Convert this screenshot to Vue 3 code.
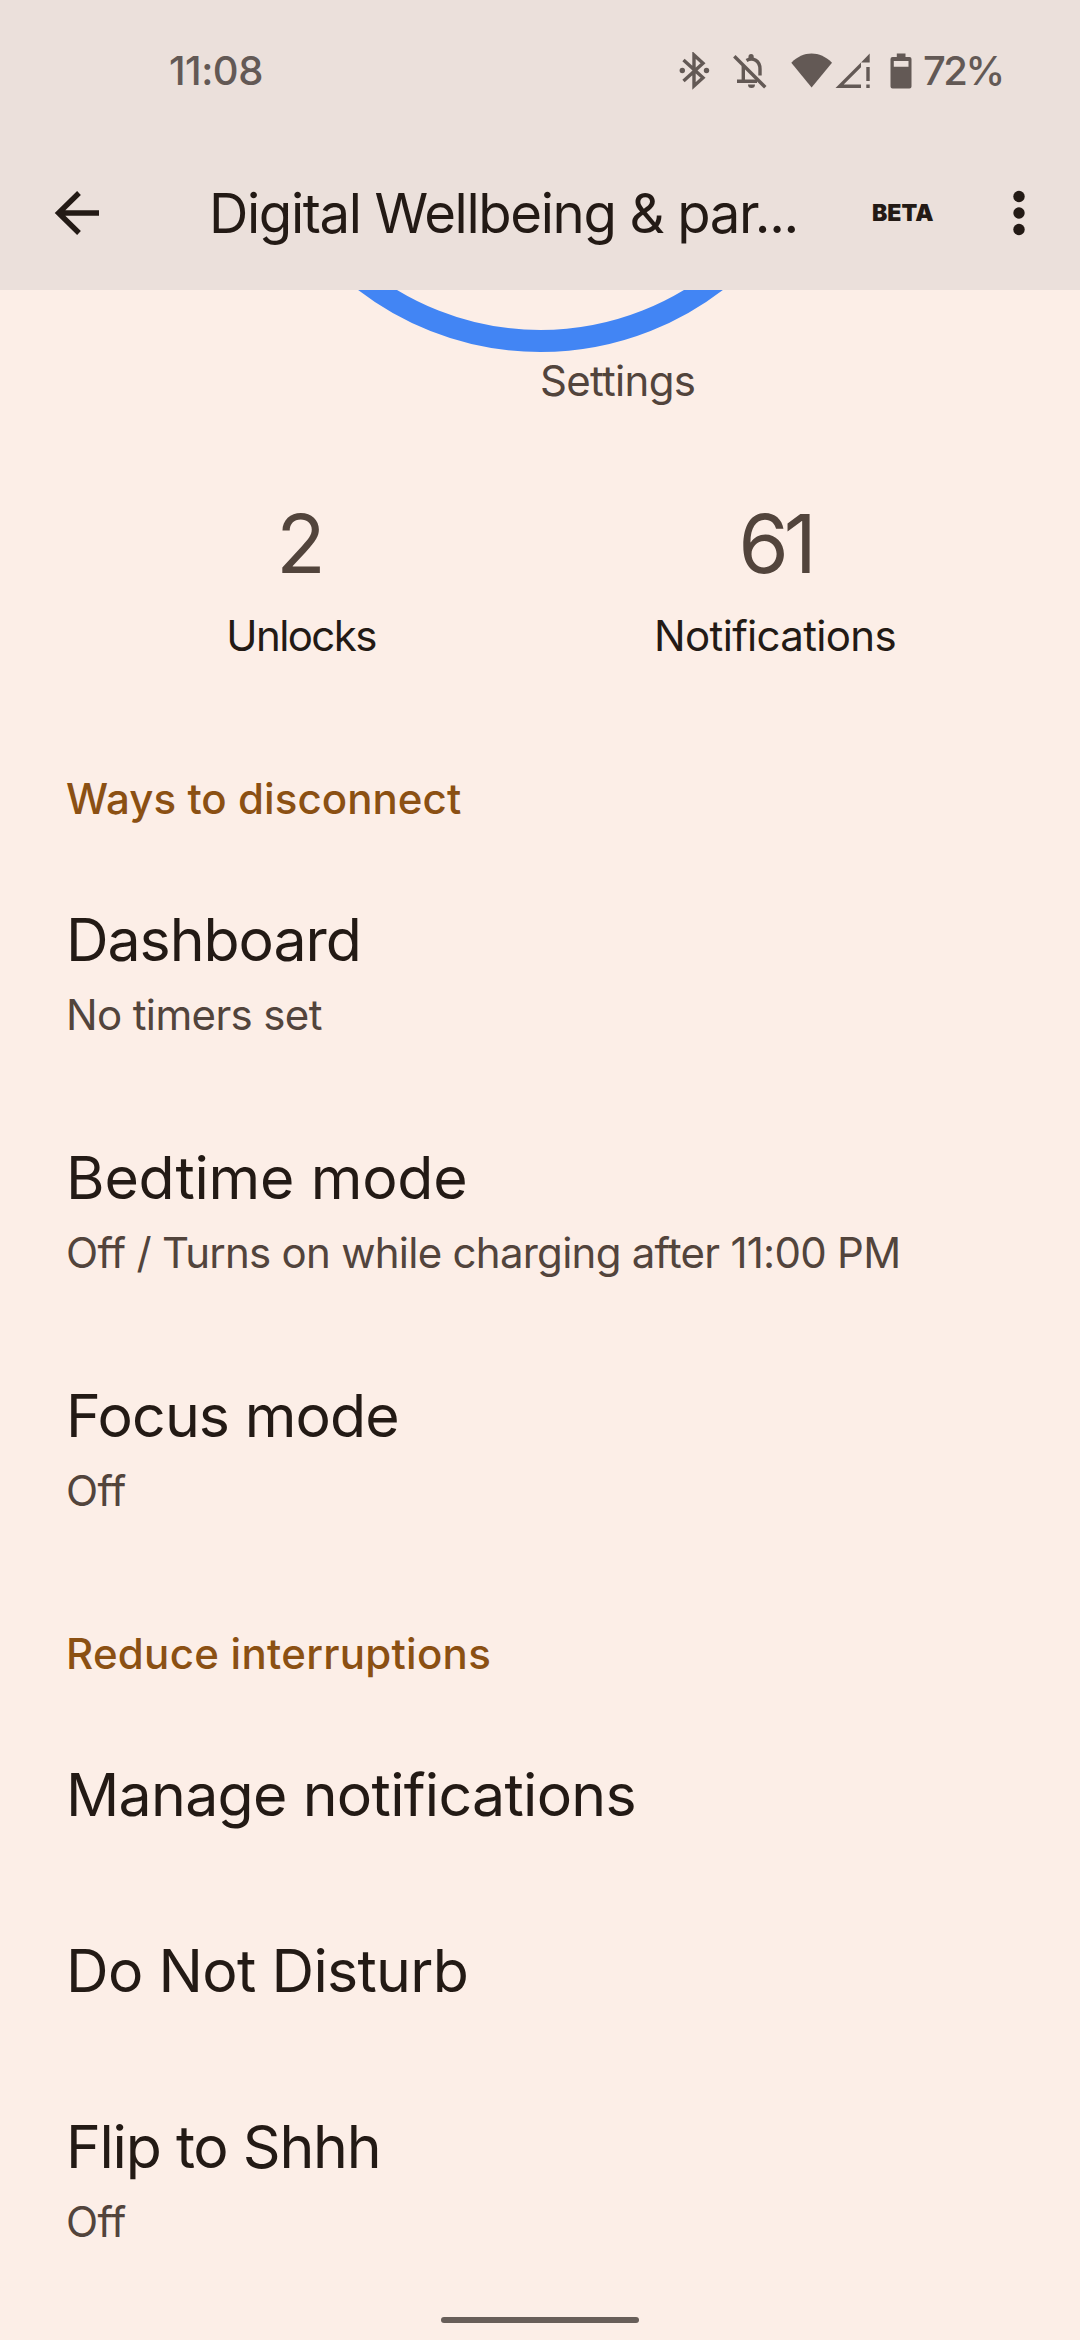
<script setup>
// tracking values are letter spacing in px
const stats = [
  { value: '2', valueTracking: 0, label: 'Unlocks', tracking: -1.6 },
  { value: '61', valueTracking: -5, label: 'Notifications', tracking: -0.67 },
];

const sections = [
  {
    title: 'Ways to disconnect',
    tracking: 0.07,
    items: [
      { title: 'Dashboard', tracking: -1.05, summary: 'No timers set', summaryTracking: -0.63 },
      {
        title: 'Bedtime mode',
        tracking: -0.2,
        summary: 'Off / Turns on while charging after 11:00 PM',
        summaryTracking: -0.74,
      },
      { title: 'Focus mode', tracking: -0.9, summary: 'Off', summaryTracking: -0.6 },
    ],
  },
  {
    title: 'Reduce interruptions',
    tracking: 0.28,
    items: [
      { title: 'Manage notifications', tracking: -0.7 },
      { title: 'Do Not Disturb', tracking: -0.68 },
      { title: 'Flip to Shhh', tracking: -1.25, summary: 'Off', summaryTracking: -0.6 },
    ],
  },
];

const spacing = (value) => ({ letterSpacing: `${value}px` });
</script>

<template>
  <div class="screen">
    <header class="header">
      <div class="status-bar">
        <span class="clock">11:08</span>
        <div class="status-icons">
          <svg class="bluetooth" width="32" height="38" viewBox="678 52 32 38">
            <path d="M683.5 60 703 77.8 694 86V55L703 63.3 683.5 81" fill="none" stroke="currentColor" stroke-width="3.4" />
            <circle cx="682.3" cy="70.5" r="2.7" fill="currentColor" />
            <circle cx="706.5" cy="70.5" r="2.7" fill="currentColor" />
          </svg>
          <svg class="bell" width="36" height="38" viewBox="732 52 36 38">
            <g fill="none" stroke="currentColor" stroke-width="3.4">
              <path d="M734.3 56.3 765.3 87.3" />
              <path d="M743.3 66V81M737 81.2H757" />
              <path d="M746.5 60.5C753 56.5 760 61 760 69V75.5" />
            </g>
            <path d="M748.5 59V56.5a2.600 2.600 0 0 1 5.200 0V59ZM748 84.600h7a3.500 3.500 0 0 1-7 0Z" fill="currentColor" />
          </svg>
          <svg class="wifi" width="42" height="38" viewBox="791 52 42 38">
            <path d="M791.3 62.7C803 50.3 820 50.3 832 62.7L811.6 87.5Z" fill="currentColor" />
          </svg>
          <svg class="signal" width="36" height="38" viewBox="835 52 36 38">
            <path d="M835.5 88 861 62.500V67.200L843.700 84.500H861V88ZM861 62.500 869.700 53.500V62.500ZM866.300 67h3.400v14h-3.400ZM866.300 84.500h3.400V88h-3.400Z" fill="currentColor" />
          </svg>
          <svg class="battery" width="22" height="38" viewBox="889.5 52 22 38">
            <path fill-rule="evenodd" d="M896.3 53.5h8.700V57h4a2 2 0 0 1 2 2v27.400a2 2 0 0 1-2 2h-17a2 2 0 0 1-2-2V59a2 2 0 0 1 2-2h4.300ZM893.300 61v5.800h14.700V61Z" fill="currentColor" />
          </svg>
          <span class="percent">72%</span>
        </div>
      </div>
      <div class="app-bar">
        <button class="icon-button back" aria-label="Back">
          <svg width="46" height="46" viewBox="54 190 46 46">
            <path d="M79 193 58.6 213 79 233M59 213H99" fill="none" stroke="currentColor" stroke-width="5.4" />
          </svg>
        </button>
        <h1 class="title">Digital Wellbeing &amp; par...</h1>
        <span class="beta">BETA</span>
        <button class="icon-button more" aria-label="More options">
          <svg width="12" height="46" viewBox="0 0 12 46">
            <circle cx="6" cy="6.5" r="5.7" fill="currentColor" />
            <circle cx="6" cy="23" r="5.7" fill="currentColor" />
            <circle cx="6" cy="39.5" r="5.7" fill="currentColor" />
          </svg>
        </button>
      </div>
    </header>

    <main class="content">
      <div class="chart">
        <svg width="600" height="62" viewBox="240 290 600 62">
          <circle cx="540.5" cy="53" r="288" fill="none" stroke="#4285f4" stroke-width="22" />
        </svg>
        <span class="chart-label">Settings</span>
      </div>

      <div class="stats">
        <div v-for="stat in stats" :key="stat.label" class="stat">
          <span class="stat-value" :style="spacing(stat.valueTracking)">{{ stat.value }}</span>
          <span class="stat-label" :style="spacing(stat.tracking)">{{ stat.label }}</span>
        </div>
      </div>

      <section v-for="section in sections" :key="section.title">
        <h2 class="section-title" :style="spacing(section.tracking)">{{ section.title }}</h2>
        <div v-for="item in section.items" :key="item.title" class="row">
          <div class="row-title" :style="spacing(item.tracking)">{{ item.title }}</div>
          <div v-if="item.summary" class="row-summary" :style="spacing(item.summaryTracking)">
            {{ item.summary }}
          </div>
        </div>
      </section>
    </main>

    <div class="nav">
      <div class="nav-handle"></div>
    </div>
  </div>
</template>

<style>
body {
  margin: 0;
  background: #fceee7;
}
</style>

<style scoped>
.screen {
  display: flex;
  flex-direction: column;
  width: 1080px;
  height: 2340px;
  overflow: hidden;
  background: #fceee7;
  color: #231a15;
  font-family: Inter, Roboto, sans-serif;
}

.header {
  flex: none;
  height: 290px;
  background: #ebe0db;
}

.status-bar {
  display: flex;
  align-items: center;
  justify-content: space-between;
  height: 141px;
  padding: 0 77px 0 169px;
  color: #635955;
  font-size: 40px;
  font-weight: 500;
}

.clock {
  letter-spacing: -0.5px;
}

.status-icons {
  display: flex;
  align-items: center;
}

.bell {
  margin-left: 22px;
}

.wifi {
  margin-left: 23px;
}

.signal {
  margin-left: 2px;
}

.battery {
  margin-left: 18.5px;
}

.percent {
  width: 80px;
  margin-left: 11.5px;
  letter-spacing: -2.5px;
}

.app-bar {
  display: flex;
  align-items: center;
  height: 144px;
  padding: 0 55px 0 54px;
}

.icon-button {
  display: flex;
  padding: 0;
  border: none;
  background: none;
  color: #231a15;
}

.title {
  width: 590px;
  margin: 0 0 0 109px;
  font-size: 54.5px;
  font-weight: 400;
  letter-spacing: -1.35px;
  white-space: nowrap;
}

.beta {
  width: 62px;
  margin-left: 73px;
  font-size: 23px;
  font-weight: 900;
  white-space: nowrap;
}

.more {
  margin-left: auto;
}

.content {
  flex: 1;
}

.chart {
  display: flex;
  flex-direction: column;
  align-items: center;
}

.chart-label {
  align-self: flex-start;
  margin-left: 50%;
  color: #52443c;
  font-size: 42px;
  line-height: 57px;
  letter-spacing: -0.7px;
}

.stats {
  display: flex;
  padding: 89.5px 68px 50px 64px;
}

.stat {
  display: flex;
  flex: 1;
  flex-direction: column;
  align-items: center;
  gap: 22px;
}

.stat-value {
  color: #52443c;
  font-size: 81px;
  line-height: 90px;
}

.stat-label {
  font-size: 42px;
  line-height: 50px;
}

.section-title {
  margin: 0;
  padding: 63px 66px 28px;
  color: #8b5013;
  font-size: 42px;
  font-weight: 500;
  line-height: 50px;
}

.row {
  padding: 52px 66px;
}

.row-title {
  font-size: 59px;
  line-height: 72px;
}

.row-summary {
  margin-top: 16px;
  color: #52443c;
  font-size: 42px;
  line-height: 46px;
}

.nav {
  display: flex;
  flex: none;
  justify-content: center;
  height: 23px;
}

.nav-handle {
  width: 198px;
  height: 6px;
  border-radius: 3px;
  background: #685e59;
}
</style>
